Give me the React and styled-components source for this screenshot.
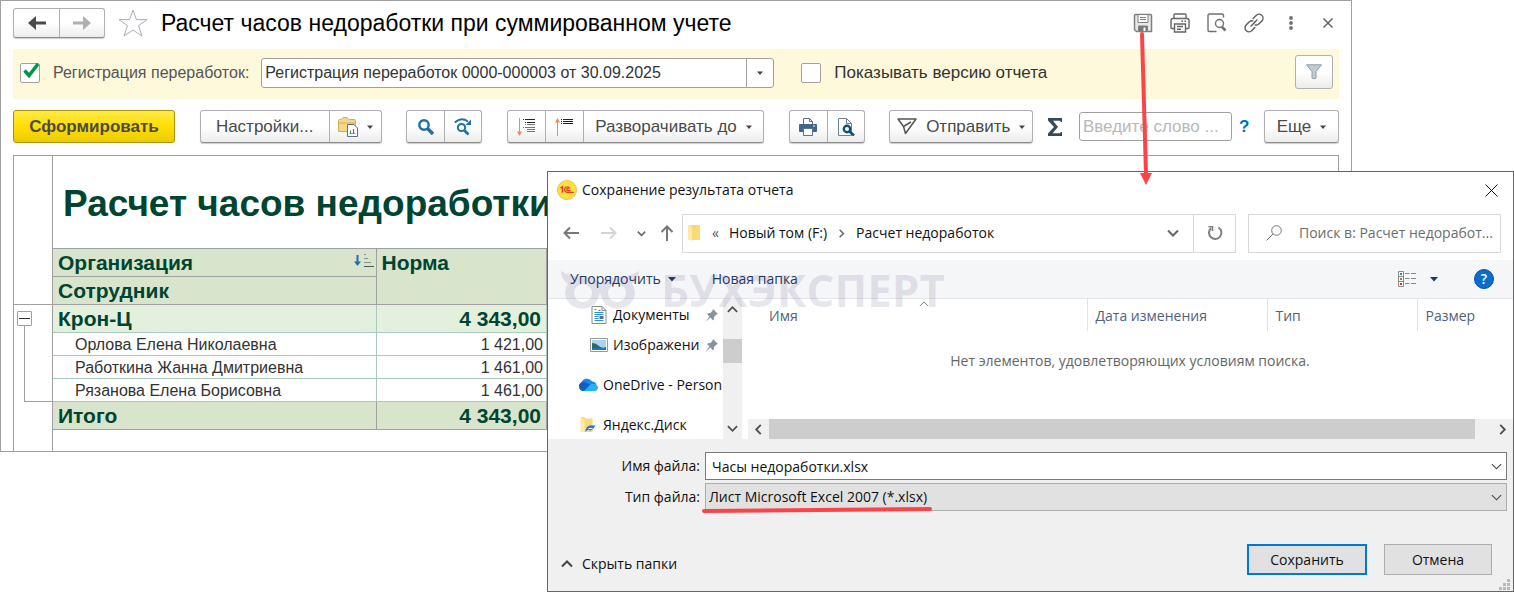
import React from "react";
import styled, { createGlobalStyle } from "styled-components";

const employees = [
  { name: "Орлова Елена Николаевна", norm: "1 421,00" },
  { name: "Работкина Жанна Дмитриевна", norm: "1 461,00" },
  { name: "Рязанова Елена Борисовна", norm: "1 461,00" },
];

export default function App() {
  return (
    <Page>
      <GlobalStyle />
      <ReportWindow />
      <SaveDialog />
      <Watermark />
      <ArrowMark />
    </Page>
  );
}

function ReportWindow() {
  return (
    <Window>
      <TitleBar>
        <ButtonGroup>
          <ToolButton $width={45} $low aria-label="Назад">
            <ArrowIcon color="#4a4a4a" />
          </ToolButton>
          <ToolButton $width={45} $low aria-label="Вперед">
            <ArrowIcon color="#b0b0b0" flip />
          </ToolButton>
        </ButtonGroup>
        <StarIcon />
        <WindowTitle>Расчет часов недоработки при суммированном учете</WindowTitle>
        <TitleActions>
          <IconButton aria-label="Сохранить"><DisketteIcon /></IconButton>
          <IconButton aria-label="Печать"><PrintOutlineIcon /></IconButton>
          <IconButton aria-label="Просмотр"><PreviewOutlineIcon /></IconButton>
          <IconButton aria-label="Ссылка"><LinkIcon /></IconButton>
          <IconButton aria-label="Меню"><DotsIcon /></IconButton>
          <IconButton aria-label="Закрыть"><CrossIcon size={10} color="#666" width={1.5} /></IconButton>
        </TitleActions>
      </TitleBar>

      <FilterBar>
        <CheckLabel $muted>
          <CheckBox>
            <input type="checkbox" defaultChecked />
            <TickIcon />
          </CheckBox>
          Регистрация переработок:
        </CheckLabel>
        <Combo>
          <input
            aria-label="Регистрация переработок"
            defaultValue="Регистрация переработок 0000-000003 от 30.09.2025"
          />
          <button aria-label="Выбрать"><Caret /></button>
        </Combo>
        <CheckLabel>
          <CheckBox>
            <input type="checkbox" />
          </CheckBox>
          Показывать версию отчета
        </CheckLabel>
        <FilterButton aria-label="Отбор"><FunnelIcon /></FilterButton>
      </FilterBar>

      <Toolbar>
        <GenerateButton>Сформировать</GenerateButton>
        <ButtonGroup>
          <ToolButton $width={128}>Настройки...</ToolButton>
          <ToolButton $width={52} aria-label="Варианты">
            <FolderReportIcon />
            <Caret />
          </ToolButton>
        </ButtonGroup>
        <ButtonGroup>
          <ToolButton $width={37} aria-label="Найти"><SearchIcon /></ToolButton>
          <ToolButton $width={37} aria-label="Найти далее"><SearchNextIcon /></ToolButton>
        </ButtonGroup>
        <ButtonGroup>
          <ToolButton $width={37} aria-label="Развернуть"><ExpandIcon /></ToolButton>
          <ToolButton $width={38} aria-label="Свернуть"><CollapseIcon /></ToolButton>
          <ToolButton $width={180}>
            Разворачивать до
            <Caret />
          </ToolButton>
        </ButtonGroup>
        <ButtonGroup>
          <ToolButton $width={37} aria-label="Печать"><PrinterIcon /></ToolButton>
          <ToolButton $width={37} aria-label="Предварительный просмотр"><PreviewIcon /></ToolButton>
        </ButtonGroup>
        <ButtonGroup>
          <ToolButton $width={142}>
            <SendIcon />
            Отправить
            <Caret />
          </ToolButton>
        </ButtonGroup>
        <SearchTools>
          <SigmaIcon />
          <WordInput aria-label="Поиск" placeholder="Введите слово ..." />
          <HelpLink href="#help">?</HelpLink>
        </SearchTools>
        <ButtonGroup>
          <ToolButton $width={73}>
            Еще
            <Caret />
          </ToolButton>
        </ButtonGroup>
      </Toolbar>

      <Sheet>
        <Gutter>
          <GutterHead />
          <GroupTree>
            <GroupToggle aria-label="Свернуть группу" />
            <GroupLine />
          </GroupTree>
        </Gutter>
        <SheetBody>
          <ReportTitle>Расчет часов недоработки</ReportTitle>
          <ReportTable>
            <thead>
              <tr>
                <HeadCell $name>
                  <HeadContent>
                    Организация
                    <SortIcon />
                  </HeadContent>
                </HeadCell>
                <HeadCell rowSpan={2}>Норма</HeadCell>
              </tr>
              <tr>
                <HeadCell $name>Сотрудник</HeadCell>
              </tr>
            </thead>
            <tbody>
              <tr>
                <GroupCell>Крон-Ц</GroupCell>
                <GroupCell $number>4 343,00</GroupCell>
              </tr>
              {employees.map(({ name, norm }) => (
                <tr key={name}>
                  <RowCell>{name}</RowCell>
                  <RowCell $number>{norm}</RowCell>
                </tr>
              ))}
            </tbody>
            <tfoot>
              <tr>
                <TotalCell>Итого</TotalCell>
                <TotalCell $number>4 343,00</TotalCell>
              </tr>
            </tfoot>
          </ReportTable>
        </SheetBody>
      </Sheet>
    </Window>
  );
}

function SaveDialog() {
  return (
    <Dialog role="dialog" aria-label="Сохранение результата отчета">
      <DialogHeader>
        <LogoIcon />
        <DialogTitle>Сохранение результата отчета</DialogTitle>
        <IconButton aria-label="Закрыть"><CrossIcon size={13} color="#111" width={1} /></IconButton>
      </DialogHeader>

      <PathRow>
        <PathNav>
          <IconButton aria-label="Назад"><ThinArrow color="#777" /></IconButton>
          <IconButton aria-label="Вперед"><ThinArrow color="#d4d4d4" turn={180} /></IconButton>
          <NarrowButton aria-label="Последние"><Chevron size={9} /></NarrowButton>
          <NarrowButton aria-label="Вверх"><ThinArrow color="#777" turn={90} /></NarrowButton>
        </PathNav>
        <AddressBox>
          <FolderIcon />
          <Crumbs>
            <Separator>«</Separator>
            <span>Новый том (F:)</span>
            <Chevron size={9} turn={-90} />
            <span>Расчет недоработок</span>
          </Crumbs>
          <HistoryButton aria-label="История"><Chevron size={12} /></HistoryButton>
          <RefreshButton aria-label="Обновить"><RefreshIcon /></RefreshButton>
        </AddressBox>
        <SearchBox>
          <ThinSearchIcon />
          <input aria-label="Поиск" placeholder="Поиск в: Расчет недоработ..." />
        </SearchBox>
      </PathRow>

      <CommandBar>
        <CommandButton>
          Упорядочить
          <Caret color="#1f3a63" size={8} />
        </CommandButton>
        <CommandButton>Новая папка</CommandButton>
        <ViewButton aria-label="Вид">
          <ListViewIcon />
          <Caret color="#1f3a63" size={8} />
        </ViewButton>
        <HelpButton aria-label="Справка">?</HelpButton>
      </CommandBar>

      <Browser>
        <FolderTree>
          <TreeItem $nested>
            <DocumentIcon />
            <span>Документы</span>
            <PinIcon />
          </TreeItem>
          <TreeItem $nested>
            <PictureIcon />
            <span>Изображени</span>
            <PinIcon />
          </TreeItem>
          <TreeItem>
            <CloudIcon />
            <span>OneDrive - Person</span>
          </TreeItem>
          <TreeItem>
            <DiskIcon />
            <span>Яндекс.Диск</span>
          </TreeItem>
        </FolderTree>
        <VerticalScroll>
          <Chevron size={11} turn={180} color="#505050" width={2} />
          <VerticalThumb />
          <Chevron size={11} color="#505050" width={2} />
        </VerticalScroll>
        <FilePane>
          <FileTable>
            <thead>
              <tr>
                <FileHead>
                  <SortMark><Chevron size={10} turn={180} width={1} /></SortMark>
                  Имя
                </FileHead>
                <FileHead $width={180}>Дата изменения</FileHead>
                <FileHead $width={150}>Тип</FileHead>
                <FileHead $width={96}>Размер</FileHead>
              </tr>
            </thead>
            <tbody>
              <tr>
                <EmptyCell colSpan={4}>Нет элементов, удовлетворяющих условиям поиска.</EmptyCell>
              </tr>
            </tbody>
          </FileTable>
          <HorizontalScroll>
            <Chevron size={11} turn={90} color="#505050" width={2} />
            <HorizontalThumb />
            <Chevron size={11} turn={-90} color="#505050" width={2} />
          </HorizontalScroll>
        </FilePane>
      </Browser>

      <DialogFooter>
        <Fields>
          <label htmlFor="file-name">Имя файла:</label>
          <FieldBox>
            <NameInput id="file-name" defaultValue="Часы недоработки.xlsx" />
            <Chevron size={11} color="#444" width={1.2} />
          </FieldBox>
          <label htmlFor="file-type">Тип файла:</label>
          <FieldBox>
            <TypeSelect id="file-type">
              <option>Лист Microsoft Excel 2007 (*.xlsx)</option>
            </TypeSelect>
            <Chevron size={11} color="#444" width={1.2} />
            <Underline viewBox="0 0 230 6">
              <path d="M2 4 L228 2" stroke="#fb4447" strokeWidth="4" strokeLinecap="round" />
            </Underline>
          </FieldBox>
        </Fields>
        <Actions>
          <HideButton>
            <Chevron size={12} turn={180} color="#444" width={2} />
            Скрыть папки
          </HideButton>
          <DialogButton $primary>Сохранить</DialogButton>
          <DialogButton>Отмена</DialogButton>
        </Actions>
        <GripIcon />
      </DialogFooter>
    </Dialog>
  );
}

function Watermark() {
  return (
    <WatermarkBox aria-hidden="true">
      <svg width="78" height="38" viewBox="0 0 78 38" fill="currentColor">
        <path
          fillRule="evenodd"
          d="M0 0Q10 6 22 6Q34 6 39 12Q44 6 56 6Q68 6 78 0Q78 8 71 13A17 16 0 1 1 40 24Q39 21 38 24A17 16 0 1 1 7 13Q0 8 0 0ZM22 13A9 9 0 1 0 22 31A9 9 0 1 0 22 13ZM56 13A9 9 0 1 0 56 31A9 9 0 1 0 56 13Z"
        />
      </svg>
      БУХЭКСПЕРТ
    </WatermarkBox>
  );
}

function ArrowMark() {
  return (
    <ArrowSvg viewBox="0 0 14 154" aria-hidden="true">
      <path d="M3 2 L7 142" stroke="#fb4447" strokeWidth="4" strokeLinecap="round" />
      <path d="M1 141 L13 141 L7 153Z" fill="#fb4447" />
    </ArrowSvg>
  );
}

/* icons */

function Caret({ color = "#444", size = 6 }) {
  return (
    <svg width={size} height={size} viewBox="0 0 8 8">
      <path d="M0 2H8L4 6.500Z" fill={color} />
    </svg>
  );
}

function Chevron({ size, turn = 0, color = "#666", width = 2 }) {
  return (
    <svg width={size} height={size} viewBox="0 0 12 12" fill="none" stroke={color} strokeWidth={width}>
      <path d="M1 3.500 6 8.500 11 3.500" transform={`rotate(${turn} 6 6)`} />
    </svg>
  );
}

function ArrowIcon({ color, flip }) {
  return (
    <svg width="18" height="14" viewBox="0 0 18 14">
      <path d="M0 7 8 0V5.500H18V8.500H8V14Z" fill={color} transform={flip ? "rotate(180 9 7)" : undefined} />
    </svg>
  );
}

function ThinArrow({ color, turn = 0 }) {
  return (
    <svg width="16" height="16" viewBox="0 0 16 16" fill="none" stroke={color} strokeWidth="2">
      <path d="M16 8H1.500M7 2.500 1.500 8 7 13.500" transform={`rotate(${turn} 8 8)`} />
    </svg>
  );
}

function StarIcon() {
  return (
    <svg width="30" height="28" viewBox="0 0 30 28" fill="#fff" stroke="#a8aeb6" strokeWidth="1">
      <path d="M15 1 18.400 10.600H29L20.500 16.600 24 27 15 21 6 27 9.500 16.600 1 10.600H11.600Z" />
    </svg>
  );
}

function CrossIcon({ size, color, width }) {
  return (
    <svg width={size} height={size} viewBox={`0 0 ${size} ${size}`} stroke={color} strokeWidth={width}>
      <path d={`M0.500 0.500 ${size - 0.5} ${size - 0.5}M${size - 0.5} 0.500 0.500 ${size - 0.5}`} />
    </svg>
  );
}

function DisketteIcon() {
  return (
    <svg width="20" height="20" viewBox="0 0 20 20" fill="none" stroke="#808080">
      <path d="M2.500 1.500H17.500Q18.500 1.500 18.500 2.500V18.500H3.500L1.500 16.500V2.500Q1.500 1.500 2.500 1.500Z" fill="#e8e8e8" strokeWidth="1.500" />
      <path d="M5 2V9.500H15V2" fill="#fff" />
      <path d="M7 4.500H13M7 6.500H13" />
      <path d="M5.500 18V13H14.500V18Z" fill="#777" />
      <path d="M10.500 14.500H12.500V18H10.500Z" fill="#fff" stroke="none" />
    </svg>
  );
}

function PrintOutlineIcon() {
  return (
    <svg width="20" height="20" viewBox="0 0 20 20" fill="none" stroke="#666" strokeWidth="1.400">
      <path d="M4 5.500V2Q4 1 5 1H15Q16 1 16 2V5.500" />
      <path d="M4 15.500H2Q1 15.500 1 14.500V7.500Q1 5.500 3 5.500H17Q19 5.500 19 7.500V14.500Q19 15.500 18 15.500H16" />
      <path d="M4.500 11H15.500V19H4.500ZM7 13.500H13M7 16.200H11M11.500 8.200H13M14.500 8.200H16" />
    </svg>
  );
}

function PreviewOutlineIcon() {
  return (
    <svg width="20" height="20" viewBox="0 0 20 20" fill="none" stroke="#707070" strokeWidth="1.400">
      <path d="M16.500 4.500V2.500Q16.500 1 15 1H2.500Q1 1 1 2.500V17Q1 18.500 2.500 18.500H9.500" />
      <circle cx="12.500" cy="10.500" r="4" />
      <path d="M15 14 18.500 17.500" strokeWidth="2.600" />
    </svg>
  );
}

function LinkIcon() {
  return (
    <svg width="20" height="20" viewBox="0 0 24 24" fill="none" stroke="#606060" strokeWidth="1.800" strokeLinecap="round">
      <path d="M8.500 15.500 15.500 8.500" />
      <path d="M11 6.500 14.500 3A4.600 4.600 0 0 1 21.500 9.500L17.500 13.500Q15.500 15 13.500 14.500" />
      <path d="M13 17.500 9.500 21A4.600 4.600 0 0 1 2.500 14.500L6.500 10.500Q8.500 9 10.500 9.500" />
    </svg>
  );
}

function DotsIcon() {
  return (
    <svg width="6" height="16" viewBox="0 0 6 16" fill="#707070">
      <circle cx="3" cy="3" r="1.900" />
      <circle cx="3" cy="8" r="1.900" />
      <circle cx="3" cy="13" r="1.900" />
    </svg>
  );
}

function TickIcon() {
  return (
    <svg width="18" height="18" viewBox="0 0 18 18" fill="none" stroke="#009646" strokeWidth="3.500">
      <path d="M2.500 7.500 7 12.500 16 1" />
    </svg>
  );
}

function FunnelIcon() {
  return (
    <svg width="16" height="16" viewBox="0 0 16 16" fill="#c3ccd4" stroke="#8f9ca8" strokeWidth="1">
      <path d="M0.500 0.800H15.500L10 7.500V14Q8 15.500 6 14V7.500Z" />
    </svg>
  );
}

function FolderReportIcon() {
  return (
    <svg width="20" height="20" viewBox="0 0 20 20">
      <path d="M0.500 14.500V3.500Q0.500 2.500 1.500 2.500H3L5 0.500H9L11 2.500H16.500Q17.500 2.500 17.500 3.500V14.500Z" fill="#f6d68a" stroke="#dcaa52" />
      <path d="M0.500 6H17.500" stroke="#dcaa52" />
      <path d="M9.500 7.500H16L19.500 11V19.500H9.500Z" fill="#fff" stroke="#5b6f86" />
      <path d="M12.500 16.500V13.500" stroke="#2f9e4f" strokeWidth="1.200" />
      <path d="M15.500 16.500V12" stroke="#d4473a" strokeWidth="1.200" />
      <path d="M11.500 16.500H17.500" stroke="#5b6f86" strokeWidth="0.700" />
    </svg>
  );
}

function SearchIcon() {
  return (
    <svg width="16" height="16" viewBox="0 0 16 16" fill="none" stroke="#1f6fa5">
      <circle cx="6" cy="6" r="4.700" strokeWidth="2.400" />
      <path d="M9.500 9.500 15 15" strokeWidth="3.400" />
    </svg>
  );
}

function SearchNextIcon() {
  return (
    <svg width="18" height="18" viewBox="0 0 18 18" fill="none" stroke="#1f6fa5">
      <circle cx="7.500" cy="9.500" r="3.600" strokeWidth="2" />
      <path d="M10.500 12.500 14.500 16.500" strokeWidth="2.600" />
      <path d="M0.800 4.500Q7 -1.500 14 3.500" strokeWidth="2" />
      <path d="M17 1.500V7H11.500Z" fill="#1f6fa5" stroke="none" />
    </svg>
  );
}

function ExpandIcon() {
  return (
    <svg width="18" height="18" viewBox="0 0 18 18" fill="none">
      <path d="M2.500 0V14" stroke="#f08a5d" />
      <path d="M0 13.500H5L2.500 18Z" fill="#f08a5d" />
      <path d="M6 1.500H7M8 1.500H18M8 4.500H9M10 4.500H18" stroke="#222" />
      <path d="M8 6.500H9M10 6.500H18M6 9.500H7M8 9.500H18M10 11.500H18M10 13.500H18" stroke="#777" />
    </svg>
  );
}

function CollapseIcon() {
  return (
    <svg width="18" height="18" viewBox="0 0 18 18" fill="none">
      <path d="M2.500 4V18" stroke="#f08a5d" />
      <path d="M0 4.500H5L2.500 0Z" fill="#f08a5d" />
      <path d="M6 1.500H7M8 1.500H18M6 3.500H7M8 3.500H18M6 5.500H7M8 5.500H18" stroke="#222" />
    </svg>
  );
}

function PrinterIcon() {
  return (
    <svg width="18" height="18" viewBox="0 0 18 18">
      <path d="M4.500 7V0.500H10.500L13.500 3.500V7Z" fill="#fff" stroke="#5c7288" />
      <path d="M10.500 0.500V3.500H13.500" fill="none" stroke="#5c7288" />
      <rect x="0" y="6" width="18" height="8" rx="1" fill="#41668f" />
      <path d="M4.500 10.500H13.500V17.500H4.500Z" fill="#fff" stroke="#5c7288" />
      <path d="M14 8H16" stroke="#fff" />
    </svg>
  );
}

function PreviewIcon() {
  return (
    <svg width="18" height="18" viewBox="0 0 18 18" fill="none">
      <path d="M1.500 0.500H9.500L14.500 5.500V17.500H1.500Z" fill="#fff" stroke="#6b8095" />
      <path d="M9.500 0.500V5.500H14.500" stroke="#6b8095" />
      <circle cx="10" cy="11" r="3.200" fill="#fff" stroke="#0d4f7c" strokeWidth="2.400" />
      <path d="M12.500 13.500 17 17.500" stroke="#0d4f7c" strokeWidth="2.600" />
    </svg>
  );
}

function SendIcon() {
  return (
    <svg width="20" height="17" viewBox="0 0 20 17" fill="none" stroke="#555" strokeWidth="1.500" strokeLinejoin="round">
      <path d="M1 1H19L8.500 15.500 6.500 8.500Z" />
      <path d="M6.500 8.500 14 4" />
    </svg>
  );
}

function SigmaIcon() {
  return (
    <svg width="14" height="18" viewBox="0 0 14 18" fill="#34495a">
      <path d="M0 0H14V4H13L12 2.800H5L10 9 4.500 15.200H12L13 14H14V18H0V15.500L6 9 0 2.500Z" />
    </svg>
  );
}

function SortIcon() {
  return (
    <svg width="20" height="14" viewBox="0 0 20 14" fill="none">
      <path d="M3.500 1V8" stroke="#1b6fb5" strokeWidth="2" />
      <path d="M0 7.500H7L3.500 12Z" fill="#1b6fb5" />
      <path d="M10 0.500H12M10 4.500H14M10 8.500H17" stroke="#8a9184" />
      <path d="M10 12.500H20" stroke="#555" />
    </svg>
  );
}

function LogoIcon() {
  return (
    <svg width="20" height="20" viewBox="0 0 20 20">
      <circle cx="10" cy="10" r="9.500" fill="#ffdf3d" stroke="#e8c84a" />
      <path d="M3.500 8 5.500 6.800V12.800" fill="none" stroke="#e0402c" strokeWidth="1.600" />
      <path d="M12.800 8.500A2.700 2.700 0 1 0 10.500 12.300H17M11.500 9.300A1 1 0 1 0 10.500 10.600H13.500" fill="none" stroke="#e0402c" strokeWidth="1.200" />
    </svg>
  );
}

function FolderIcon() {
  return (
    <svg width="12" height="16" viewBox="0 0 12 16">
      <path d="M2 0H12V15H2Z" fill="#f9d978" />
      <path d="M0 0H2.500L4 3V16L0 14.500Z" fill="#fdeaa8" />
    </svg>
  );
}

function RefreshIcon() {
  return (
    <svg width="16" height="16" viewBox="0 0 16 16" fill="none" stroke="#808080" strokeWidth="2">
      <path d="M11.500 2.500A6.200 6.200 0 1 1 4 3.200" />
      <path d="M1.500 1.800H5.500V6" strokeWidth="1.600" />
    </svg>
  );
}

function ThinSearchIcon() {
  return (
    <svg width="16" height="16" viewBox="0 0 16 16" fill="none" stroke="#777">
      <circle cx="10.500" cy="5.500" r="4.800" />
      <path d="M7 9 0.500 15.500" />
    </svg>
  );
}

function ListViewIcon() {
  return (
    <svg width="18" height="16" viewBox="0 0 18 16" fill="none" stroke="#8a8a8a">
      <path d="M0.500 0.500H5.500V15.500H0.500ZM0.500 5.500H5.500M0.500 10.500H5.500M7 2.500H11.500M13 2.500H18M7 7.500H11.500M13 7.500H18M7 12.500H11.500M13 12.500H18" />
      <path d="M2 2H4V4H2Z" fill="#3b7fc4" stroke="none" />
      <path d="M2 7H4V9H2Z" fill="#8c8a2e" stroke="none" />
      <path d="M2 12H4V14H2Z" fill="#c0392b" stroke="none" />
    </svg>
  );
}

function DocumentIcon() {
  return (
    <svg height="18" viewBox="0 0 15 18" fill="none">
      <path d="M0.500 0.500H10.500L14.500 4.500V17.500H0.500Z" fill="#fff" stroke="#8c8c8c" />
      <path d="M10.500 0.500V4.500H14.500" stroke="#8c8c8c" />
      <path d="M3 3.500H5M3 6.500H12M7 4.500H9M3 8.500H12M3 10.500H7M3 12.500H7M3 14.500H12" stroke="#2d8bd0" />
      <path d="M8 10H12V13H8Z" fill="#54718c" />
    </svg>
  );
}

function PictureIcon() {
  return (
    <svg height="14" viewBox="0 0 18 14">
      <path d="M0.500 0.500H17.500V13.500H0.500Z" fill="#fff" stroke="#999" />
      <path d="M2 2H16V12H2Z" fill="#a9d4f2" />
      <path d="M2 5Q6 5 9 8T16 9V12H2Z" fill="#2e6a60" />
      <path d="M2 10H16V12H2Z" fill="#2a74ad" />
    </svg>
  );
}

function CloudIcon() {
  return (
    <svg height="14" viewBox="0 0 20 14">
      <path d="M5 13A4.700 4.700 0 0 1 3.500 4.300 6 6 0 0 1 14 3.500 5 5 0 0 1 16 13Z" fill="#1a86e0" />
      <path d="M5 13A4.700 4.700 0 0 1 3.500 4.300 5 5 0 0 1 8.500 5L14 8 6 13Z" fill="#0f5fc4" />
      <path d="M6 13 12.500 6.500A5 5 0 0 1 20 9 4 4 0 0 1 16 13Z" fill="#27b0f5" />
    </svg>
  );
}

function DiskIcon() {
  return (
    <svg height="16" viewBox="0 0 15 16">
      <path d="M1 0H4L5 1.500H12V15H1Z" fill="#f9d978" />
      <path d="M0 0 4 3V16L0 14Z" fill="#fdeaa8" />
      <path d="M5 15Q5 9 10 8.500H15L12.500 12Q10 14.500 8 12.500 6 13 5 15Z" fill="#1f6fd6" />
      <path d="M8 11.500H12" stroke="#fff" strokeWidth="1.200" />
    </svg>
  );
}

function PinIcon() {
  return (
    <svg width="13" height="13" viewBox="0 0 13 13">
      <path d="M8 0 13 5 11.500 5.500 9 8Q9.500 10 8 11.500L5.500 8.500 0.500 13 4.500 7.500 2 5Q3.500 3.500 5.500 4L7.500 1.500Z" fill="#8793a0" />
    </svg>
  );
}

function GripIcon() {
  return (
    <Grip viewBox="0 0 11 11" fill="#b8b8b8">
      <path d="M8 0H11V3H8ZM4 4H7V7H4ZM8 4H11V7H8ZM0 8H3V11H0ZM4 8H7V11H4ZM8 8H11V11H8Z" />
    </Grip>
  );
}

/* styles */

const GlobalStyle = createGlobalStyle`
  :root {
    --line: #a0a0a0;
    --sheet-line: #a9c9bd;
    --dark-green: #004532;
    --head-green: #d8e5cc;
    --group-green: #e4f0de;
    --ui-font: "Liberation Sans", Arial, sans-serif;
    --dialog-font: "Open Sans", "Segoe UI", sans-serif;
  }

  *, *::before, *::after {
    box-sizing: border-box;
  }

  body {
    margin: 0;
    background: #fff;
    font-family: var(--ui-font);
  }

  button, input, select {
    margin: 0;
    font: inherit;
    color: inherit;
  }

  svg {
    flex: none;
  }
`;

const Page = styled.main`
  position: relative;
  min-height: 592px;
  overflow: hidden;
`;

const Window = styled.section`
  margin-right: 162px;
  padding: 0 12px;
  border: 1px solid var(--line);
  font-size: 17px;
  color: #4a4a4a;
`;

const TitleBar = styled.header`
  display: flex;
  align-items: center;
  height: 48px;
  padding-bottom: 4px;
  gap: 13px;
`;

const WindowTitle = styled.h1`
  margin: 0;
  flex: 1;
  font-size: 23px;
  font-weight: 400;
  line-height: 28px;
  white-space: nowrap;
  color: #000;
`;

const TitleActions = styled.div`
  display: flex;
  gap: 1px;
  margin-right: -7px;
`;

const IconButton = styled.button`
  display: flex;
  align-items: center;
  justify-content: center;
  width: 36px;
  height: 28px;
  padding: 0;
  border: 0;
  background: none;
`;

const ButtonGroup = styled.div`
  display: flex;
  border: 1px solid #b0b0b0;
  border-bottom-color: #8c8c8c;
  border-radius: 3px;
  background: linear-gradient(#fff 50%, #ececec);
  box-shadow: 0 1px 1px #ccc;

  > button + button {
    border-left: 1px solid #b0b0b0;
  }
`;

const ToolButton = styled.button`
  display: flex;
  align-items: center;
  justify-content: center;
  gap: 9px;
  width: ${({ $width }) => $width}px;
  height: ${({ $low }) => ($low ? 28 : 31)}px;
  padding: 0;
  border: 0;
  background: none;
  white-space: nowrap;
`;

const FilterBar = styled.div`
  display: flex;
  align-items: center;
  height: 50px;
  padding: 0 6px 2px 7px;
  background: #fff9dc;
`;

const CheckLabel = styled.label`
  display: flex;
  align-items: center;
  gap: 13px;
  white-space: nowrap;
  font-size: ${({ $muted }) => ($muted ? 16 : 17)}px;
  color: ${({ $muted }) => ($muted ? "#555" : "#333")};
`;

const CheckBox = styled.span`
  display: grid;

  > * {
    grid-area: 1 / 1;
  }

  input {
    appearance: none;
    width: 20px;
    height: 20px;
    border: 1px solid var(--line);
    border-radius: 2px;
    background: #fff;
  }

  svg {
    align-self: start;
    justify-self: end;
    pointer-events: none;
  }
`;

const Combo = styled.div`
  display: flex;
  width: 513px;
  height: 30px;
  margin: 0 27px 0 12px;
  border: 1px solid var(--line);
  border-radius: 3px;
  background: #fff;
  color: #333;
  font-size: 16px;

  input {
    flex: 1;
    min-width: 0;
    padding: 0 3px;
    border: 0;
    background: none;
  }

  button {
    width: 27px;
    padding: 0;
    border: 0;
    border-left: 1px solid var(--line);
    background: none;
    display: flex;
    align-items: center;
    justify-content: center;
  }
`;

const FilterButton = styled.button`
  display: flex;
  align-items: center;
  justify-content: center;
  width: 38px;
  height: 34px;
  margin: 0 0 2px auto;
  padding: 0;
  border: 1px solid #b0b0b0;
  border-radius: 3px;
  background: linear-gradient(#fff 50%, #ececec);
`;

const Toolbar = styled.div`
  display: flex;
  align-items: center;
  justify-content: space-between;
  height: 56px;
  padding-bottom: 1px;
`;

const GenerateButton = styled.button`
  width: 162px;
  height: 33px;
  padding: 0;
  border: 1px solid #a89408;
  border-radius: 3px;
  background: linear-gradient(#ffe94a, #ffde00 50%, #eccb00);
  font-weight: 700;
`;

const SearchTools = styled.div`
  display: flex;
  align-items: center;
  margin: 0 -10px;
`;

const WordInput = styled.input`
  width: 153px;
  height: 29px;
  margin: 0 7px 0 17px;
  padding: 0 3px;
  border: 1px solid var(--line);
  border-radius: 3px;

  &::placeholder {
    color: #b8b8b8;
    opacity: 1;
  }
`;

const HelpLink = styled.a`
  color: #0070ba;
  font-weight: 700;
  text-decoration: none;
`;

const Sheet = styled.div`
  display: grid;
  grid-template-columns: 38px 1fr;
  height: 296px;
  border: 1px solid var(--line);
  border-bottom: 0;
`;

const Gutter = styled.div`
  display: flex;
  flex-direction: column;
`;

const GutterHead = styled.div`
  height: 149px;
  border-bottom: 1px solid var(--line);
`;

const GroupTree = styled.div`
  display: flex;
  flex-direction: column;
  height: 97px;
  padding: 6px 0 0 3px;
`;

const GroupToggle = styled.button`
  display: flex;
  align-items: center;
  width: 15px;
  height: 15px;
  padding: 1px;
  border: 1px solid var(--line);
  border-radius: 1px;
  background: #fff;

  &::before {
    content: "";
    width: 100%;
    height: 1px;
    background: #333;
  }
`;

const GroupLine = styled.div`
  flex: 1;
  margin-left: 7px;
  border: solid var(--line);
  border-width: 0 0 1px 1px;
`;

const SheetBody = styled.div`
  min-width: 0;
  border-left: 1px solid var(--line);
`;

const ReportTitle = styled.h2`
  height: 92px;
  margin: 0;
  padding-left: 10px;
  font-size: 37px;
  line-height: 96px;
  white-space: nowrap;
  color: var(--dark-green);
`;

const ReportTable = styled.table`
  width: 494px;
  border-collapse: collapse;
  table-layout: fixed;
`;

const HeadCell = styled.th`
  width: ${({ $name }) => ($name ? "323px" : "auto")};
  height: 28px;
  padding: 1px 2px 0 5px;
  border: solid var(--line);
  border-width: 1px 1px 1px 0;
  background: var(--head-green);
  color: var(--dark-green);
  font-size: 21px;
  line-height: 26px;
  text-align: left;
  vertical-align: top;
`;

const HeadContent = styled.div`
  display: flex;
  justify-content: space-between;

  svg {
    margin-top: 4px;
  }
`;

const GroupCell = styled.td`
  height: 28px;
  padding: 0 5px;
  border: solid var(--sheet-line);
  border-width: 0 1px 1px 0;
  background: var(--group-green);
  color: var(--dark-green);
  font-size: 21px;
  font-weight: 700;
  line-height: 26px;
  text-align: ${({ $number }) => ($number ? "right" : "left")};
`;

const RowCell = styled(GroupCell)`
  height: 23px;
  padding: 1px ${({ $number }) => ($number ? 3 : 0)}px 0 22px;
  background: #fff;
  color: #333;
  font-size: 16px;
  font-weight: 400;
  line-height: 20px;
`;

const TotalCell = styled(GroupCell)`
  border: solid var(--line);
  border-width: 1px 1px 1px 0;
  background: var(--head-green);
`;

const Dialog = styled.section`
  position: absolute;
  top: 171px;
  left: 547px;
  right: 0;
  border: 1px solid #666;
  background: #fff;
  color: #111;
  font-family: var(--dialog-font);
  font-size: 14px;
  line-height: 20px;
`;

const DialogHeader = styled.header`
  display: flex;
  align-items: center;
  gap: 5px;
  height: 36px;
  padding: 0 4px 0 9px;
`;

const DialogTitle = styled.h2`
  flex: 1;
  margin: 0;
  font-size: 14px;
  font-weight: 400;
`;

const PathRow = styled.div`
  display: flex;
  align-items: center;
  height: 52px;
  padding: 0 12px 2px 5px;
`;

const PathNav = styled.div`
  display: flex;
  gap: 2px;
  width: 129px;
`;

const NarrowButton = styled(IconButton)`
  width: 24px;
`;

const AddressBox = styled.div`
  display: flex;
  align-items: center;
  flex: 1;
  height: 39px;
  padding-left: 5px;
  border: 1px solid #d9d9d9;
`;

const Crumbs = styled.div`
  display: flex;
  align-items: center;
  flex: 1;
  gap: 10px;
  margin-left: 12px;
  white-space: nowrap;
`;

const Separator = styled.span`
  color: #555;
`;

const HistoryButton = styled(IconButton)`
  width: 40px;
`;

const RefreshButton = styled(IconButton)`
  width: 42px;
  height: 37px;
  border-left: 1px solid #d9d9d9;
`;

const SearchBox = styled.label`
  display: flex;
  align-items: center;
  gap: 17px;
  width: 253px;
  height: 39px;
  margin-left: 12px;
  padding: 0 4px 0 17px;
  border: 1px solid #d9d9d9;

  input {
    flex: 1;
    min-width: 0;
    padding: 0;
    border: 0;
    outline: 0;
  }

  input::placeholder {
    color: #6d6d6d;
    opacity: 1;
  }
`;

const CommandBar = styled.div`
  display: flex;
  align-items: center;
  gap: 36px;
  height: 39px;
  padding: 0 19px 0 22px;
  border-bottom: 1px solid #e4e6ea;
  background: #f5f6f8;
`;

const CommandButton = styled.button`
  display: flex;
  align-items: center;
  gap: 7px;
  padding: 0;
  border: 0;
  background: none;
  color: #1f3a63;
`;

const ViewButton = styled(CommandButton)`
  gap: 14px;
  margin-left: auto;
`;

const HelpButton = styled.button`
  width: 20px;
  height: 20px;
  padding: 0;
  border: 1px solid #0a4f9e;
  border-radius: 50%;
  background: #0a6cce;
  color: #fff;
  font-weight: 600;
  line-height: 18px;
`;

const Browser = styled.div`
  display: flex;
  height: 140px;
`;

const FolderTree = styled.nav`
  width: 175px;
  padding-top: 1px;
  overflow: hidden;
`;

const TreeItem = styled.div`
  display: flex;
  align-items: center;
  gap: 5px;
  height: ${({ $nested }) => ($nested ? 30 : 40)}px;
  padding: ${({ $nested }) => ($nested ? "0 5px 0 42px" : "10px 0 0 30px")};
  white-space: nowrap;

  svg:first-child {
    width: ${({ $nested }) => ($nested ? 18 : 20)}px;
  }

  span {
    flex: 1;
  }
`;

const VerticalScroll = styled.div`
  display: flex;
  flex-direction: column;
  align-items: center;
  width: 19px;
  padding: 5px 0;
  background: #f0f0f0;
`;

const VerticalThumb = styled.div`
  width: 19px;
  height: 24px;
  margin: 24px 0 auto;
  background: #cdcdcd;
`;

const FilePane = styled.div`
  display: flex;
  flex-direction: column;
  justify-content: space-between;
  flex: 1;
  min-width: 0;
  margin-left: 6px;
`;

const FileTable = styled.table`
  margin-left: 13px;
  border-collapse: collapse;
  table-layout: fixed;
`;

const FileHead = styled.th`
  width: ${({ $width }) => ($width ? `${$width}px` : "auto")};
  height: 32px;
  padding: 1px 8px 0;
  border-right: 1px solid #e2e2e2;
  color: #52627a;
  font-weight: 400;
  text-align: left;
  position: relative;

  &:last-child {
    border-right: 0;
  }
`;

const SortMark = styled.span`
  position: absolute;
  top: 0;
  left: 50%;
  margin-left: -5px;
  line-height: 8px;
`;

const EmptyCell = styled.td`
  padding: 20px 14px 0 0;
  color: #666;
  text-align: center;
`;

const HorizontalScroll = styled.div`
  display: flex;
  align-items: center;
  gap: 5px;
  height: 20px;
  padding: 0 5px;
  background: #f0f0f0;
`;

const HorizontalThumb = styled.div`
  flex: 1;
  height: 20px;
  margin-right: 17px;
  background: #cdcdcd;
`;

const DialogFooter = styled.footer`
  padding: 13px 6px 16px 13px;
  background: #f0f0f0;
`;

const Fields = styled.div`
  display: grid;
  grid-template-columns: 139px 1fr;
  align-items: center;
  gap: 3px 5px;

  label {
    text-align: right;
  }
`;

const FieldBox = styled.div`
  position: relative;
  display: grid;
  align-items: center;

  > * {
    grid-area: 1 / 1;
  }

  > svg {
    justify-self: end;
    margin-right: 5px;
    pointer-events: none;
  }
`;

const NameInput = styled.input`
  width: 100%;
  height: 28px;
  padding: 0 6px;
  border: 1px solid #7a7a7a;
  background: #fff;
`;

const TypeSelect = styled.select`
  appearance: none;
  width: 100%;
  height: 28px;
  padding: 0 3px;
  border: 1px solid #adadad;
  border-radius: 0;
  background: #e1e1e1;
`;

const Underline = styled.svg`
  position: absolute;
  left: -3px;
  bottom: -2px;
  width: 230px;
  height: 6px;
`;

const Actions = styled.div`
  display: flex;
  align-items: center;
  gap: 17px;
  margin-top: 33px;
  padding-right: 15px;
`;

const HideButton = styled.button`
  display: flex;
  align-items: center;
  gap: 9px;
  margin: 8px auto 0 0;
  padding: 0;
  border: 0;
  background: none;
`;

const DialogButton = styled.button`
  width: ${({ $primary }) => ($primary ? 120 : 108)}px;
  height: 31px;
  padding: 0;
  border: ${({ $primary }) => ($primary ? "2px solid #0078d7" : "1px solid #adadad")};
  background: #e1e1e1;
`;

const Grip = styled.svg`
  position: absolute;
  right: 3px;
  bottom: 1px;
  width: 11px;
  height: 11px;
`;

const WatermarkBox = styled.div`
  position: absolute;
  top: 270px;
  left: 561px;
  display: flex;
  align-items: center;
  gap: 22px;
  color: rgba(70, 60, 110, 0.13);
  font-family: "Open Sans", sans-serif;
  font-size: 44px;
  font-weight: 700;
  line-height: 40px;
  pointer-events: none;
`;

const ArrowSvg = styled.svg`
  position: absolute;
  top: 32px;
  left: 1139px;
  width: 14px;
  height: 154px;
  fill: none;
  pointer-events: none;
`;
